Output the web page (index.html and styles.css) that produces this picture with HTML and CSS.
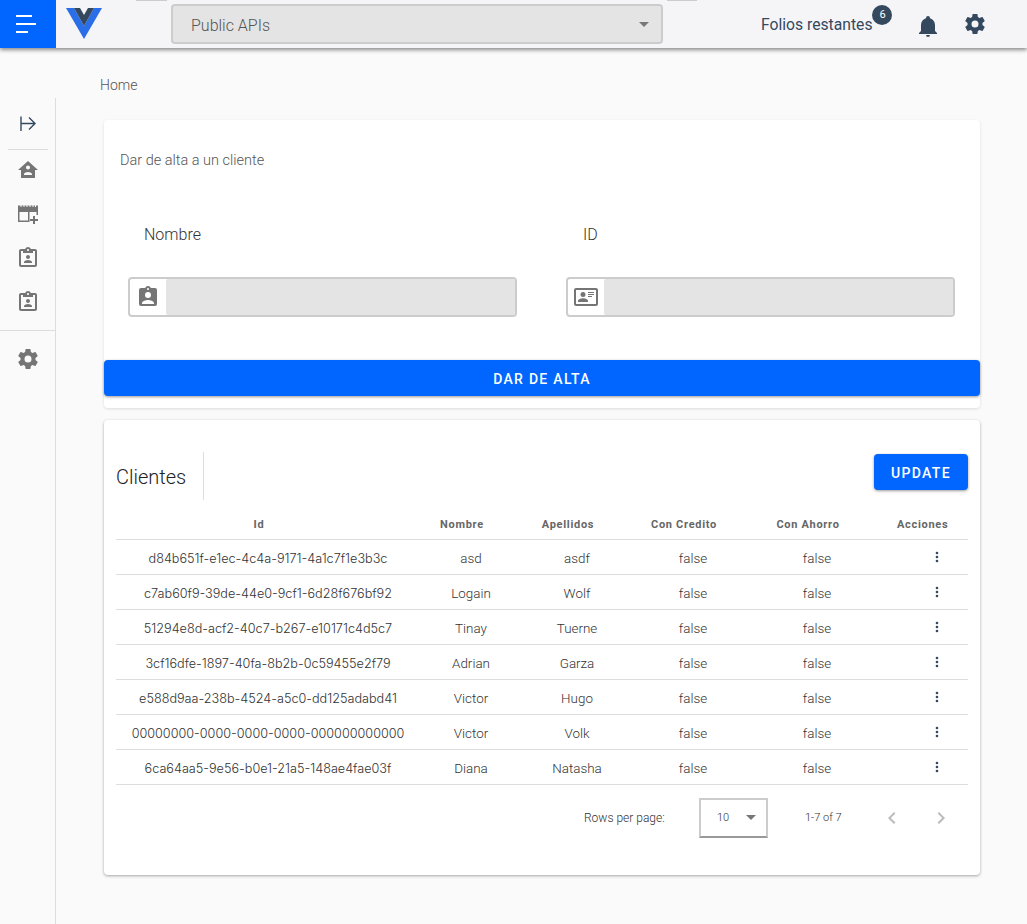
FILE: index.html
```html
<!DOCTYPE html>
<html lang="en">
<head>
<meta charset="UTF-8">
<meta name="viewport" content="width=device-width, initial-scale=1.0">
<title>Clientes</title>
<link rel="stylesheet" href="styles.css">
</head>
<body>
<header class="topbar">
    <div class="menu-box">
        <span class="menu-line line-a"></span>
        <span class="menu-line line-b"></span>
        <span class="menu-line line-c"></span>
    </div>
    <svg class="logo" viewBox="0 0 36 31">
        <path fill="#2a6ee8" d="M0 0H8L18 18L28 0H36L18 31Z"/>
        <path fill="#34495e" d="M8 0H14L18 7L22 0H28L18 18Z"/>
    </svg>
    <div class="top-tab tab-left"></div>
    <div class="api-select">
        <span class="api-name">Public APIs</span>
        <span class="caret"></span>
    </div>
    <div class="top-tab tab-right"></div>
    <div class="folios">
        <span class="folios-text">Folios restantes</span>
        <span class="badge">6</span>
    </div>
    <svg class="top-icon bell" viewBox="0 0 24 24"><path d="M21,19V20H3V19L5,17V11C5,7.9 7.03,5.17 10,4.29C10,4.19 10,4.1 10,4A2,2 0 0,1 12,2A2,2 0 0,1 14,4C14,4.1 14,4.19 14,4.29C16.97,5.17 19,7.9 19,11V17L21,19M14,21A2,2 0 0,1 12,23A2,2 0 0,1 10,21"/></svg>
    <svg class="top-icon cog" viewBox="0 0 24 24"><path d="M12,15.5A3.5,3.5 0 0,1 8.5,12A3.5,3.5 0 0,1 12,8.5A3.5,3.5 0 0,1 15.5,12A3.5,3.5 0 0,1 12,15.5M19.43,12.97C19.47,12.65 19.5,12.33 19.5,12C19.5,11.67 19.47,11.34 19.43,11L21.54,9.37C21.73,9.22 21.78,8.95 21.66,8.73L19.66,5.27C19.54,5.05 19.27,4.96 19.05,5.05L16.56,6.05C16.04,5.66 15.5,5.32 14.87,5.07L14.5,2.42C14.46,2.18 14.25,2 14,2H10C9.75,2 9.54,2.18 9.5,2.42L9.13,5.07C8.5,5.32 7.96,5.66 7.44,6.05L4.95,5.05C4.73,4.96 4.46,5.05 4.34,5.27L2.34,8.73C2.21,8.95 2.27,9.22 2.46,9.37L4.57,11C4.53,11.34 4.5,11.67 4.5,12C4.5,12.33 4.53,12.65 4.57,12.97L2.46,14.63C2.27,14.78 2.21,15.05 2.34,15.27L4.34,18.73C4.46,18.95 4.73,19.03 4.95,18.95L7.44,17.94C7.96,18.34 8.5,18.68 9.13,18.93L9.5,21.58C9.54,21.82 9.75,22 10,22H14C14.25,22 14.46,21.82 14.5,21.58L14.87,18.93C15.5,18.67 16.04,18.34 16.56,17.94L19.05,18.95C19.27,19.03 19.54,18.95 19.66,18.73L21.66,15.27C21.78,15.05 21.73,14.78 21.54,14.63L19.43,12.97Z"/></svg>
</header>

<div class="page">
    <aside class="sidebar">
        <svg class="collapse" viewBox="0 0 16 16"><path d="M1 .5V15M1 7.5H15M9 1.5L15 7.5L9 13.5"/></svg>
        <hr class="side-rule">
        <div class="side-group">
            <svg class="side-icon" viewBox="0 0 24 24"><path d="M12 3L2 12H5V20H19V12H22L12 3M12 7.5C13.11 7.5 14 8.4 14 9.5C14 10.61 13.11 11.5 12 11.5C10.9 11.5 10 10.61 10 9.5C10 8.4 10.9 7.5 12 7.5M16 17H8V16C8 14.67 10.67 14 12 14C13.33 14 16 14.67 16 16V17Z"/></svg>
            <svg class="side-icon" viewBox="0 0 24 24"><path fill-rule="evenodd" d="M2 3.5H22V13H20.5V10H13.5V20H2ZM3.5 10V18.5H12V10ZM4.5 3.5V5H5.5V3.5ZM7.5 3.5V5H8.5V3.5ZM10.5 3.5V5H11.5V3.5ZM13.5 3.5V5H14.5V3.5ZM16.5 3.5V5H17.5V3.5ZM19 3.5V5H20V3.5ZM17 14H19V17H22V19H19V22H17V19H14V17H17Z"/></svg>
            <svg class="side-icon" viewBox="0 0 24 24"><path d="M19 3H14.82C14.4 1.84 13.3 1 12 1S9.6 1.84 9.18 3H5C3.9 3 3 3.9 3 5V19C3 20.1 3.9 21 5 21H19C20.1 21 21 20.1 21 19V5C21 3.9 20.1 3 19 3M12 3C12.55 3 13 3.45 13 4S12.55 5 12 5 11 4.55 11 4 11.45 3 12 3M19 19H5V5H7V7H17V5H19V19M12 9C13.1 9 14 9.9 14 11S13.1 13 12 13 10 12.1 10 11 10.9 9 12 9M16 17H8V16C8 14.67 10.67 14 12 14S16 14.67 16 16V17Z"/></svg>
            <svg class="side-icon" viewBox="0 0 24 24"><path d="M19 3H14.82C14.4 1.84 13.3 1 12 1S9.6 1.84 9.18 3H5C3.9 3 3 3.9 3 5V19C3 20.1 3.9 21 5 21H19C20.1 21 21 20.1 21 19V5C21 3.9 20.1 3 19 3M12 3C12.55 3 13 3.45 13 4S12.55 5 12 5 11 4.55 11 4 11.45 3 12 3M19 19H5V5H7V7H17V5H19V19M12 9C13.1 9 14 9.9 14 11S13.1 13 12 13 10 12.1 10 11 10.9 9 12 9M16 17H8V16C8 14.67 10.67 14 12 14S16 14.67 16 16V17Z"/></svg>
        </div>
        <hr class="side-rule wide">
        <svg class="side-icon" viewBox="0 0 24 24"><path d="M12,15.5A3.5,3.5 0 0,1 8.5,12A3.5,3.5 0 0,1 12,8.5A3.5,3.5 0 0,1 15.5,12A3.5,3.5 0 0,1 12,15.5M19.43,12.97C19.47,12.65 19.5,12.33 19.5,12C19.5,11.67 19.47,11.34 19.43,11L21.54,9.37C21.73,9.22 21.78,8.95 21.66,8.73L19.66,5.27C19.54,5.05 19.27,4.96 19.05,5.05L16.56,6.05C16.04,5.66 15.5,5.32 14.87,5.07L14.5,2.42C14.46,2.18 14.25,2 14,2H10C9.75,2 9.54,2.18 9.5,2.42L9.13,5.07C8.5,5.32 7.96,5.66 7.44,6.05L4.95,5.05C4.73,4.96 4.46,5.05 4.34,5.27L2.34,8.73C2.21,8.95 2.27,9.22 2.46,9.37L4.57,11C4.53,11.34 4.5,11.67 4.5,12C4.5,12.33 4.53,12.65 4.57,12.97L2.46,14.63C2.27,14.78 2.21,15.05 2.34,15.27L4.34,18.73C4.46,18.95 4.73,19.03 4.95,18.95L7.44,17.94C7.96,18.34 8.5,18.68 9.13,18.93L9.5,21.58C9.54,21.82 9.75,22 10,22H14C14.25,22 14.46,21.82 14.5,21.58L14.87,18.93C15.5,18.67 16.04,18.34 16.56,17.94L19.05,18.95C19.27,19.03 19.54,18.95 19.66,18.73L21.66,15.27C21.78,15.05 21.73,14.78 21.54,14.63L19.43,12.97Z"/></svg>
    </aside>

    <main class="content">
        <div class="crumb">Home</div>

        <section class="card form-card">
            <h2 class="form-title">Dar de alta a un cliente</h2>
            <div class="form-grid">
                <div class="field">
                    <label class="field-label">Nombre</label>
                    <div class="input-box">
                        <span class="input-icon">
                            <svg viewBox="0 0 24 24"><path d="M19,3H14.82C14.4,1.84 13.3,1 12,1C10.7,1 9.6,1.84 9.18,3H5A2,2 0 0,0 3,5V19A2,2 0 0,0 5,21H19A2,2 0 0,0 21,19V5A2,2 0 0,0 19,3M12,3A1,1 0 0,1 13,4A1,1 0 0,1 12,5A1,1 0 0,1 11,4A1,1 0 0,1 12,3M12,7A3,3 0 0,1 15,10A3,3 0 0,1 12,13A3,3 0 0,1 9,10A3,3 0 0,1 12,7M18,19H6V18C6,16 10,14.9 12,14.9C14,14.9 18,16 18,18V19Z"/></svg>
                        </span>
                        <span class="input-fill"></span>
                    </div>
                </div>
                <div class="field">
                    <label class="field-label">ID</label>
                    <div class="input-box">
                        <span class="input-icon">
                            <svg viewBox="0 0 24 24"><path d="M22,3H2C0.9,3 0,3.9 0,5V19C0,20.1 .9,21 2,21H22C23.1,21 24,20.1 24,19V5C24,3.9 23.1,3 22,3M22,19H2V5H22V19M14,17V15.75C14,14.09 10.66,13.25 9,13.25C7.34,13.25 4,14.09 4,15.75V17H14M9,7A2.5,2.5 0 0,0 6.5,9.5A2.5,2.5 0 0,0 9,12A2.5,2.5 0 0,0 11.5,9.5A2.5,2.5 0 0,0 9,7M14,7V8H20V7H14M14,9V10H20V9H14M14,11V12H18V11H14"/></svg>
                        </span>
                        <span class="input-fill"></span>
                    </div>
                </div>
            </div>
            <button class="btn btn-wide">DAR DE ALTA</button>
        </section>

        <section class="card table-card">
            <div class="table-head">
                <h2 class="table-title">Clientes</h2>
                <button class="btn btn-update">UPDATE</button>
            </div>
            <table class="clients">
                <thead>
                    <tr>
                        <th class="c-id">Id</th>
                        <th class="c-name">Nombre</th>
                        <th class="c-last">Apellidos</th>
                        <th class="c-credit">Con Credito</th>
                        <th class="c-saving">Con Ahorro</th>
                        <th class="c-actions">Acciones</th>
                    </tr>
                </thead>
                <tbody id="rows"></tbody>
            </table>
            <div class="pager">
                <span class="rows-label">Rows per page:</span>
                <div class="rows-select">
                    <span>10</span>
                    <span class="caret"></span>
                </div>
                <span class="range">1-7 of 7</span>
                <svg class="chev" viewBox="0 0 24 24"><path d="M15.41,16.58L10.83,12L15.41,7.41L14,6L8,12L14,18L15.41,16.58Z"/></svg>
                <svg class="chev chev-next" viewBox="0 0 24 24"><path d="M8.59,16.58L13.17,12L8.59,7.41L10,6L16,12L10,18L8.59,16.58Z"/></svg>
            </div>
        </section>
    </main>
</div>
<script>
    const clients = [
        ['d84b651f-e1ec-4c4a-9171-4a1c7f1e3b3c', 'asd', 'asdf'],
        ['c7ab60f9-39de-44e0-9cf1-6d28f676bf92', 'Logain', 'Wolf'],
        ['51294e8d-acf2-40c7-b267-e10171c4d5c7', 'Tinay', 'Tuerne'],
        ['3cf16dfe-1897-40fa-8b2b-0c59455e2f79', 'Adrian', 'Garza'],
        ['e588d9aa-238b-4524-a5c0-dd125adabd41', 'Victor', 'Hugo'],
        ['00000000-0000-0000-0000-000000000000', 'Victor', 'Volk'],
        ['6ca64aa5-9e56-b0e1-21a5-148ae4fae03f', 'Diana', 'Natasha']
    ];
    const dots = '<svg class="dots" viewBox="0 0 24 24"><path d="M12,16A2,2 0 0,1 14,18A2,2 0 0,1 12,20A2,2 0 0,1 10,18A2,2 0 0,1 12,16M12,10A2,2 0 0,1 14,12A2,2 0 0,1 12,14A2,2 0 0,1 10,12A2,2 0 0,1 12,10M12,4A2,2 0 0,1 14,6A2,2 0 0,1 12,8A2,2 0 0,1 10,6A2,2 0 0,1 12,4Z"/></svg>';
    const body = document.getElementById('rows');
    clients.forEach(function (c) {
        const row = document.createElement('tr');
        row.innerHTML = `
            <td class="uuid">${c[0]}</td>
            <td>${c[1]}</td>
            <td>${c[2]}</td>
            <td>false</td>
            <td>false</td>
            <td class="c-actions">${dots}</td>
        `;
        body.appendChild(row);
    });
</script>
</body>
</html>
```

FILE: styles.css
```css
* {
    box-sizing: border-box;
}
body {
    margin: 0;
    background-color: #fafafa;
    font-family: Roboto, Arial, sans-serif;
    color: #555;
}
.topbar {
    display: flex;
    align-items: center;
    height: 48px;
    background-color: #f5f5f8;
    box-shadow: 0 2px 4px rgba(0, 0, 0, 0.45);
    position: relative;
}
.menu-box {
    display: flex;
    flex-direction: column;
    gap: 6px;
    justify-content: center;
    width: 56px;
    height: 48px;
    padding-left: 16px;
    background-color: #0066ff;
}
.menu-line {
    display: block;
    height: 2px;
    background-color: #fff;
}
.line-a {
    width: 16px;
}
.line-b {
    width: 20px;
}
.line-c {
    width: 12px;
}
.logo {
    width: 36px;
    height: 31px;
    margin: 8px 0 0 10px;
    align-self: flex-start;
}
.top-tab {
    align-self: flex-start;
    width: 31px;
    height: 1px;
    background-color: #ccc;
}
.tab-left {
    margin-left: 34px;
}
.tab-right {
    width: 30px;
}
.api-select {
    display: flex;
    align-items: center;
    justify-content: space-between;
    width: 492px;
    height: 40px;
    margin: 0 4px;
    padding: 0 12px 0 18px;
    background-color: #e4e4e4;
    border: 2px solid #ccc;
    border-radius: 4px;
    font-size: 16px;
    font-weight: 300;
    color: #555;
}
.api-name {
    padding-top: 3px;
}
.caret {
    width: 0;
    height: 0;
    border-left: 5px solid transparent;
    border-right: 5px solid transparent;
    border-top: 5px solid #777;
}
.folios {
    display: flex;
    align-items: flex-start;
    margin-left: 64px;
    font-size: 15.7px;
    color: #34495e;
}
.folios-text {
    padding-top: 1px;
}
.badge {
    display: block;
    width: 20px;
    height: 20px;
    margin-top: -9px;
    border-radius: 50%;
    background-color: #34495e;
    color: #fff;
    font-size: 11px;
    line-height: 20px;
    text-align: center;
}
.top-icon {
    width: 24px;
    height: 24px;
    fill: #34495e;
}
.bell {
    margin-left: 24px;
    margin-top: 3px;
}
.cog {
    margin-left: 23px;
}
.page {
    display: flex;
    align-items: flex-start;
}
.sidebar {
    display: flex;
    flex-direction: column;
    align-items: center;
    flex: none;
    width: 56px;
    height: 826px;
    margin-top: 50px;
    padding-top: 18px;
    border-right: 1px solid #ddd;
}
.collapse {
    width: 16px;
    height: 16px;
    fill: none;
    stroke: #34495e;
    stroke-width: 1.4;
}
.side-rule {
    width: 40px;
    margin: 17px 0 8px;
    border: 0;
    border-top: 1px solid #ddd;
}
.side-rule.wide {
    width: 56px;
    margin: 16px 0 16px;
}
.side-group {
    display: flex;
    flex-direction: column;
    gap: 20px;
}
.side-icon {
    display: block;
    width: 24px;
    height: 24px;
    fill: #757575;
}
.content {
    width: 924px;
    padding: 29px 0 0 44px;
}
.crumb {
    font-size: 14px;
    font-weight: 300;
    line-height: 17px;
    color: #555;
}
.card {
    width: 876px;
    margin-left: 4px;
    background-color: #fff;
    border-radius: 4px;
}
.form-card {
    height: 288px;
    margin-top: 26px;
    padding-top: 33px;
    box-shadow: 0 1px 3px rgba(0, 0, 0, 0.12);
}
.form-title {
    margin: 0 0 0 16px;
    font-size: 14.5px;
    font-weight: 300;
    line-height: 16px;
    color: #555;
}
.form-grid {
    display: grid;
    grid-template-columns: 389px 389px;
    column-gap: 49px;
    margin: 56px 0 43px 24px;
}
.field-label {
    display: block;
    height: 52px;
    padding-top: 1px;
    font-size: 16px;
    font-weight: 300;
    line-height: 18px;
    color: #333;
}
.field:first-child .field-label {
    padding-left: 16px;
}
.field:last-child .field-label {
    padding-left: 17px;
}
.input-box {
    display: flex;
    height: 40px;
    border: 2px solid #ccc;
    border-radius: 4px;
    background-color: #fff;
}
.input-icon {
    display: flex;
    align-items: center;
    justify-content: center;
    width: 36px;
}
.input-icon svg {
    width: 24px;
    height: 24px;
    fill: #757575;
}
.input-fill {
    flex: 1;
    background-color: #e4e4e4;
    border-radius: 2px;
}
.btn {
    padding: 2px 0 0;
    border: none;
    border-radius: 4px;
    background-color: #0066ff;
    color: #fff;
    font-family: Roboto, Arial, sans-serif;
    font-size: 14px;
    font-weight: 500;
    letter-spacing: 1.3px;
    box-shadow: 0 1px 3px rgba(0, 0, 0, 0.4);
}
.btn-wide {
    display: block;
    width: 100%;
    height: 36px;
}
.table-card {
    height: 455px;
    margin-top: 12px;
    padding: 32px 12px 0;
    box-shadow: 0 1px 3px rgba(0, 0, 0, 0.35);
}
.table-head {
    display: flex;
    align-items: flex-start;
    justify-content: space-between;
    height: 55px;
}
.table-title {
    width: 88px;
    height: 48px;
    margin: 0;
    border-right: 1px solid #ddd;
    font-size: 20px;
    font-weight: 300;
    line-height: 50px;
    color: #222;
}
.btn-update {
    width: 94px;
    height: 36px;
    margin-top: 2px;
}
.clients {
    width: 852px;
    table-layout: fixed;
    border-collapse: collapse;
}
.clients th {
    height: 32px;
    padding: 3px 18px 0 0;
    border-bottom: 1px solid #ddd;
    font-size: 11px;
    font-weight: 700;
    letter-spacing: 0.7px;
    color: #666;
}
.clients td {
    height: 35px;
    padding: 3px 0 0;
    border-bottom: 1px solid #ddd;
    font-size: 13.4px;
    font-weight: 300;
    text-align: center;
    color: #333;
}
.clients .uuid {
    font-family: Inter, Roboto, sans-serif;
    font-size: 12.65px;
    font-weight: 300;
}
.c-id {
    width: 304px;
}
.c-name {
    width: 102px;
}
.c-last {
    width: 110px;
}
.c-credit {
    width: 122px;
}
.c-saving {
    width: 126px;
}
.clients th.c-actions {
    padding-left: 17px;
    padding-right: 20px;
    white-space: nowrap;
}
.clients td.c-actions {
    padding-left: 26px;
}
.dots {
    display: block;
    width: 16px;
    height: 16px;
    margin: -3px auto 0;
    fill: #34495e;
}
.pager {
    display: flex;
    align-items: center;
    height: 40px;
    margin-top: 13px;
    padding-left: 468px;
    font-size: 11px;
    font-weight: 300;
    color: #333;
}
.rows-label {
    flex: none;
    width: 115px;
    padding-top: 1px;
    font-size: 12px;
}
.rows-select {
    display: flex;
    flex: none;
    align-items: center;
    justify-content: space-between;
    width: 69px;
    height: 40px;
    padding: 0 10px 0 16px;
    border: 2px solid #ccc;
    border-bottom-color: #999;
}
.range {
    flex: none;
    width: 75px;
    margin-left: 37px;
}
.chev {
    flex: none;
    width: 24px;
    height: 24px;
    fill: #bbb;
}
.chev-next {
    margin-left: 25px;
}
```
